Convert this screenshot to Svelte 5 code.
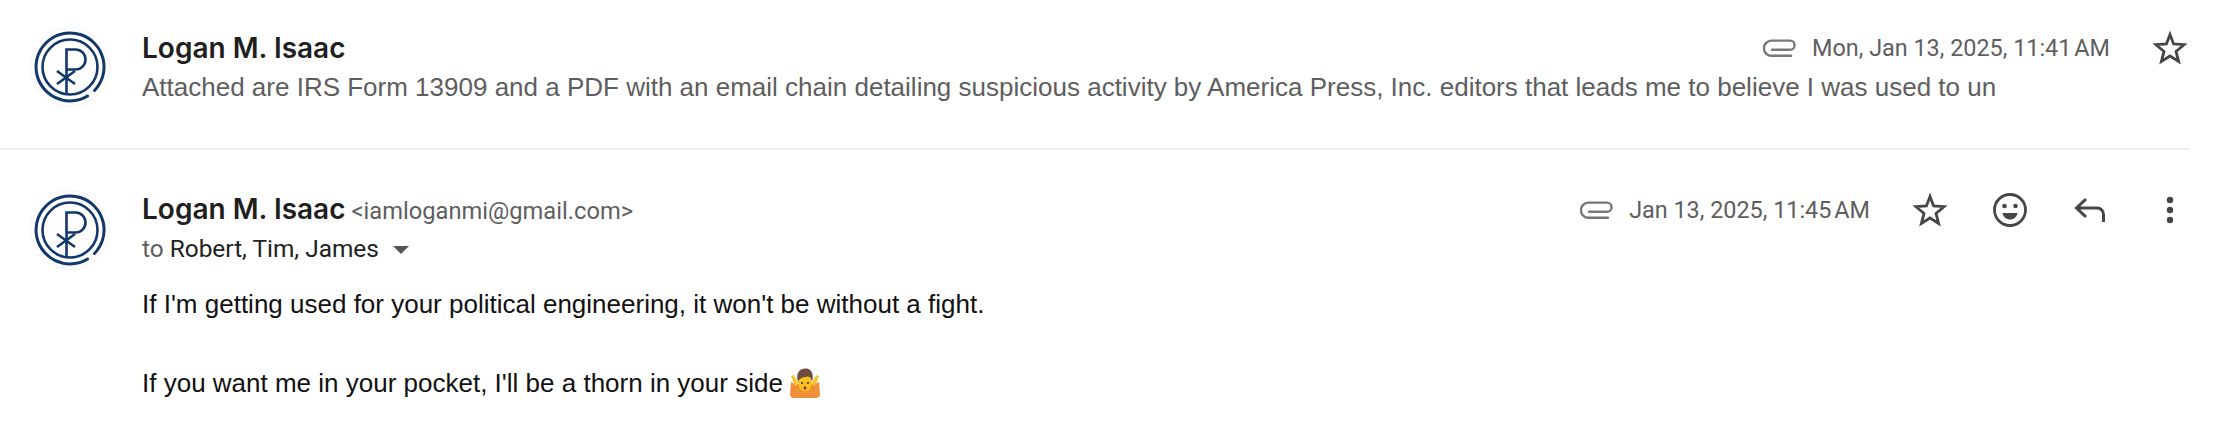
<script>
  const first = "Attached are IRS Form 13909 and a PDF with an email chain detailing suspicious activity by America Press, Inc. editors that leads me to believe I was used to un";
</script>

{#snippet avatar()}
  <svg class="avatar" viewBox="0 0 80 80" fill="none" stroke="#12386b">
    <circle cx="40" cy="40" r="39.5" stroke="#f4f4f4" stroke-width="1" fill="#fff" />
    <path d="M 57.6 69 A 34 34 0 1 1 64.5 63.5" stroke-width="3" stroke-linecap="round" />
    <circle cx="40" cy="40" r="27.5" stroke-width="2.6" />
    <path d="M36.5 67 V22.5 H45.5 A10 10 0 0 1 45.5 42.5 H36.5" stroke-width="2.6" />
    <path d="M27 44 L45 57 M45 44 L27 57" stroke-width="2.6" />
  </svg>
{/snippet}

{#snippet clip()}
  <svg class="clip" viewBox="0 0 33 18" fill="none" stroke="#777" stroke-width="2.4" stroke-linecap="round">
    <path d="M28 16.8 H8.5 A7.6 7.6 0 0 1 8.5 1.6 H27 A4.6 4.6 0 0 1 27 10.8 H9" />
  </svg>
{/snippet}

{#snippet star()}
  <svg class="icon" viewBox="0 0 36 36" fill="none" stroke="#444746" stroke-width="2.8" stroke-linejoin="miter">
    <path d="M18 4.5 L21.6 14 L32 14.7 L24 21.4 L26.6 31.5 L18 26 L9.4 31.5 L12 21.4 L4 14.7 L14.4 14 Z" />
  </svg>
{/snippet}

<div class="page">
  <section class="row collapsed">
    {@render avatar()}
    <div class="main">
      <div class="line">
        <span class="name">Logan M. Isaac</span>
      </div>
      <div class="snippet">{first}</div>
    </div>
    <div class="meta first-meta">
      {@render clip()}
      <span class="date">Mon, Jan 13, 2025, 11:41&#8239;AM</span>
      <span class="btn">{@render star()}</span>
    </div>
  </section>

  <section class="row open">
    {@render avatar()}
    <div class="main">
      <div class="line">
        <span class="name">Logan M. Isaac</span>
        <span class="email">&lt;iamloganmi@gmail.com&gt;</span>
      </div>
      <div class="to">
        <span class="to-label">to</span> Robert, Tim, James
        <svg class="caret" viewBox="0 0 16 8"><path d="M0 0 H16 L8 8 Z" fill="#555" /></svg>
      </div>
      <div class="body">
        <p>If I'm getting used for your political engineering, it won't be without a fight.</p>
        <p>If you want me in your pocket, I'll be a thorn in your side
          <svg class="emoji" viewBox="0 0 30 30">
            <path d="M1 14 L5 16 H25 L29 14 L30 26 Q30 30 26 30 H4 Q0 30 0 26 Z" fill="#ee8f3a" />
            <path d="M1 8 L5 18 L8.5 16 L4 7 Z M29 8 L25 18 L21.5 16 L26 7 Z" fill="#fbc02d" />
            <ellipse cx="15" cy="15" rx="6.8" ry="8.5" fill="#fcc21b" />
            <path d="M8 14 C5 4 11 0 16 0.5 C22 0.5 24 7 22 14 C21.5 10 20 9 18 8.5 C14 9.5 10 9 8 14 Z" fill="#6d4c41" />
            <circle cx="12" cy="15" r="1.1" fill="#4a342e" />
            <circle cx="18" cy="15" r="1.1" fill="#4a342e" />
            <ellipse cx="15" cy="20" rx="1.4" ry="1.8" fill="#7a3b1e" />
          </svg>
        </p>
      </div>
    </div>
    <div class="meta">
      {@render clip()}
      <span class="date">Jan 13, 2025, 11:45&#8239;AM</span>
      <span class="btn">{@render star()}</span>
      <span class="btn">
        <svg class="icon" viewBox="0 0 36 36" fill="none" stroke="#444746" stroke-width="2.8">
          <circle cx="18" cy="18" r="15.5" />
          <circle cx="12.5" cy="14" r="2.3" fill="#444746" stroke="none" />
          <circle cx="23.5" cy="14" r="2.3" fill="#444746" stroke="none" />
          <path d="M10.5 21 H25.5 C24.5 25.5 21.5 27.5 18 27.5 C14.5 27.5 11.5 25.5 10.5 21 Z" fill="#444746" stroke="none" />
        </svg>
      </span>
      <span class="btn">
        <svg class="icon" viewBox="0 0 36 36" fill="none" stroke="#444746" stroke-width="3">
          <path d="M14 7 L4.5 16 L14 25 M5 16 H25 A6.5 6.5 0 0 1 31.5 22.5 V30" />
        </svg>
      </span>
      <span class="btn">
        <svg class="icon" viewBox="0 0 36 36" fill="#444746">
          <circle cx="18" cy="8" r="3.2" />
          <circle cx="18" cy="18" r="3.2" />
          <circle cx="18" cy="28" r="3.2" />
        </svg>
      </span>
    </div>
  </section>
</div>

<style>
  :global(body) {
    margin: 0;
    background: #fff;
  }
  .page {
    width: 2218px;
    height: 432px;
    overflow: hidden;
    background: #fff;
  }
  .row {
    display: flex;
    position: relative;
    width: 2190px;
    box-sizing: border-box;
    padding-left: 30px;
    gap: 32px;
  }
  .collapsed {
    height: 150px;
    padding-top: 27px;
    border-bottom: 2px solid #eeeeee;
  }
  .open {
    height: 282px;
    padding-top: 40px;
  }
  .avatar {
    width: 80px;
    height: 80px;
    flex: none;
  }
  .main {
    flex: 1;
    min-width: 0;
    color: #1f1f1f;
    margin-top: 1px;
  }
  .collapsed .main {
    margin-top: 3px;
  }
  .line {
    height: 36px;
    line-height: 36px;
    white-space: nowrap;
  }
  .name {
    font: 600 28px/36px Inter, sans-serif;
    color: #1f1f1f;
  }
  .email {
    font: 400 23.7px/36px Roboto, sans-serif;
    color: #5e5e5e;
    margin-left: 2px;
  }
  .snippet {
    font: 400 26px/40px "Liberation Sans", sans-serif;
    color: #5e5e5e;
    margin-top: 1px;
    white-space: nowrap;
  }
  .to {
    font: 400 24.4px/36px Roboto, sans-serif;
    color: #222;
    margin-top: 4px;
    white-space: nowrap;
  }
  .to-label {
    color: #5e5e5e;
  }
  .caret {
    width: 16px;
    height: 8px;
    margin-left: 8px;
    vertical-align: 3px;
  }
  .body {
    font: 400 26px/39.5px "Liberation Sans", sans-serif;
    color: #111;
    margin-top: 18px;
  }
  .body p {
    margin: 0 0 39px;
    white-space: nowrap;
  }
  .emoji {
    width: 30px;
    height: 30px;
    vertical-align: -6px;
  }
  .meta {
    position: absolute;
    top: 0;
    right: 0;
    display: flex;
    align-items: center;
    height: 36px;
  }
  .open .meta {
    top: 42px;
    right: 2px;
  }
  .first-meta {
    top: 30px;
    right: 2px;
  }
  .clip {
    width: 33px;
    height: 18px;
    margin-right: 16px;
  }
  .date {
    font: 400 23.4px/36px Roboto, sans-serif;
    color: #5e5e5e;
    white-space: nowrap;
  }
  .btn {
    display: flex;
    width: 36px;
    height: 36px;
    margin-left: 44px;
  }
  .date + .btn {
    margin-left: 42px;
  }
  .icon {
    width: 36px;
    height: 36px;
  }
</style>
